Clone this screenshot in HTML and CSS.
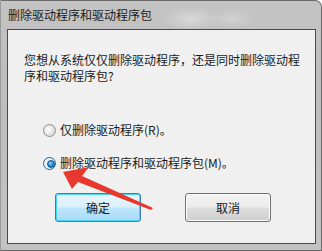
FILE: index.html
```html
<!DOCTYPE html>
<html>
<head>
<meta charset="utf-8">
<link rel="stylesheet" href="styles.css">
</head>
<body>
<div class="window">
  <div class="title">删除驱动程序和驱动程序包</div>
  <div class="client">
    <p class="question">您想从系统仅仅删除驱动程序，还是同时删除驱动程序和驱动程序包?</p>
    <div class="options">
      <label class="option"><span class="radio"></span><span>仅删除驱动程序(R)。</span></label>
      <label class="option"><span class="radio checked"></span><span>删除驱动程序和驱动程序包(M)。</span></label>
    </div>
    <div class="buttons">
      <button class="btn default">确定</button>
      <button class="btn">取消</button>
    </div>
  </div>
  <svg class="arrow" width="322" height="251" viewBox="0 0 322 251">
    <polygon points="63,172 89,167 82,176 153,208 151,210 78,182 72,189" fill="#e8382d"/>
  </svg>
</div>
</body>
</html>
```
FILE: styles.css
```css
html, body {
  margin: 0;
  padding: 0;
  background: #ffffff;
}
body {
  font-family: "Noto Sans CJK SC", "Noto Sans", sans-serif;
  font-size: 12px;
  color: #1a1a1a;
}
.window {
  position: relative;
  width: 322px;
  height: 251px;
  box-sizing: border-box;
  border: 1px solid #6a6a6a;
  border-top-right-radius: 7px;
  border-left-color: #9a9a9a;
  background:
    radial-gradient(ellipse 30px 12px at 190px 18px, rgba(230,230,230,0.6), rgba(230,230,230,0)),
    radial-gradient(ellipse 22px 10px at 232px 18px, rgba(225,225,225,0.5), rgba(225,225,225,0)),
    linear-gradient(to bottom, #c4c4c4, #bdbdbd 30%, #c2c2c2);
  display: flex;
  flex-direction: column;
  overflow: hidden;
}
.title {
  height: 28px;
  line-height: 28px;
  padding-left: 7px;
  font-size: 12px;
  color: #1c1c1c;
  letter-spacing: 0;
}
.client {
  margin: 0 5px 0 6px;
  height: 215px;
  box-sizing: border-box;
  border: 1px solid #4a4a4a;
  background: #f0f0f0;
  display: flex;
  flex-direction: column;
  padding: 22px 12px 0 16px;
}
.question {
  margin: 0;
  line-height: 16px;
  width: 280px;
}
.options {
  display: flex;
  flex-direction: column;
  gap: 17px;
  margin-top: 38px;
  padding-left: 19px;
}
.option {
  display: flex;
  align-items: center;
  gap: 4px;
  height: 16px;
  line-height: 16px;
}
.radio {
  width: 11px;
  height: 11px;
  border-radius: 50%;
  border: 1px solid #8e8f8f;
  background: radial-gradient(circle at 40% 40%, #ffffff, #dcdcdc 70%, #cfcfcf);
  position: relative;
}
.radio.checked {
  border-color: #2c628b;
  background: radial-gradient(circle at 50% 50%, #ffffff, #e6eef5 80%);
}
.radio.checked::after {
  content: "";
  position: absolute;
  left: 2.5px;
  top: 2.5px;
  width: 6px;
  height: 6px;
  border-radius: 50%;
  background: radial-gradient(circle at 40% 35%, #8fd2f5, #1b8fd1 55%, #0f5a94);
  border: 0.5px solid #0d4f84;
}
.buttons {
  display: flex;
  gap: 44px;
  margin-top: 22px;
  padding-left: 31px;
}
.btn {
  width: 86px;
  height: 29px;
  box-sizing: border-box;
  border: 1px solid #707070;
  border-radius: 3px;
  font-family: "Noto Sans CJK SC", "Noto Sans", sans-serif;
  font-size: 12px;
  color: #1a1a1a;
  background: linear-gradient(to bottom, #f3f3f3 0%, #ebebeb 48%, #dddddd 52%, #cfcfcf 100%);
  box-shadow: inset 0 0 0 1px #fcfcfc;
  padding: 0;
}
.btn.default {
  border-color: #3c7fb1;
  background: linear-gradient(to bottom, #eaf6fd 0%, #d9f0fc 48%, #bee6fd 52%, #a7d9f5 100%);
  box-shadow: inset 0 0 0 1px #48d5f8;
}
.arrow {
  position: absolute;
  left: -1px;
  top: -1px;
  pointer-events: none;
}
```
